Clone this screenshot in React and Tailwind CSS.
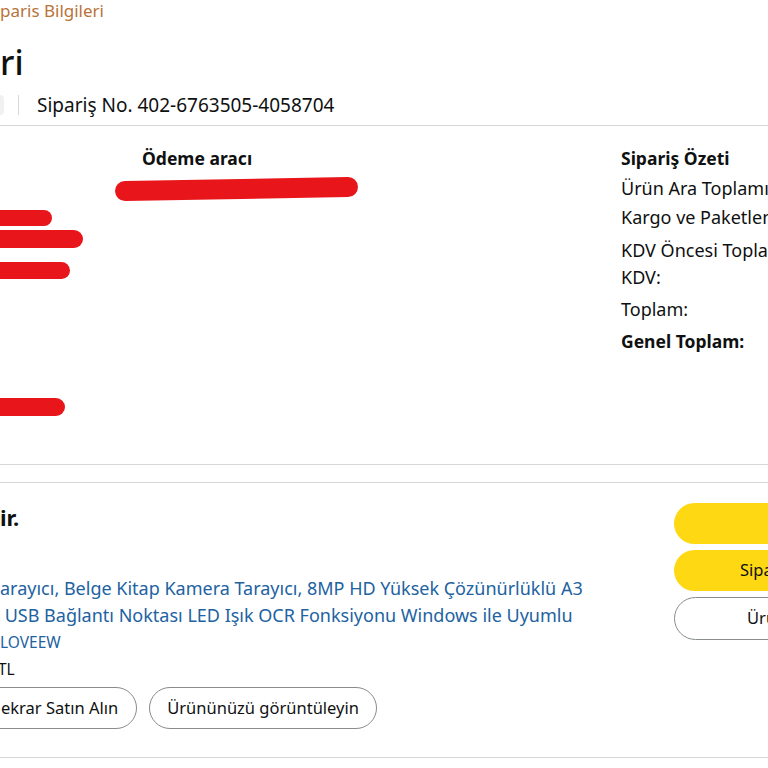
import React from "react"

const Redact = ({ className }) => (
  <div className={"absolute bg-[#e8161b] rounded-full " + className}></div>
)

export default function App() {
  return (
    <div className="w-[768px] h-[768px] overflow-hidden bg-white text-[#0f1111] relative" style={{ fontFamily: '"Noto Sans", "Open Sans", sans-serif' }}>
      {/* breadcrumb */}
      <div className="h-[24px] leading-[22px] text-[17px] text-[#b8733a] whitespace-nowrap">paris Bilgileri</div>

      {/* title */}
      <h1 className="mt-[16px] h-[44px] leading-[44px] text-[34px] font-medium whitespace-nowrap">ri</h1>

      {/* order meta */}
      <div className="mt-[6px] flex items-center h-[30px] whitespace-nowrap">
        <div className="w-[4px] h-[20px] bg-[#f0f2f2] rounded-r-sm"></div>
        <div className="ml-[14px] w-px h-[20px] bg-[#d5d9d9]"></div>
        <span className="ml-[18px] text-[19px] leading-[22px]">Sipariş No. 402-6763505-4058704</span>
      </div>

      {/* details card */}
      <div className="mt-[5px] border-t border-b border-[#d5d9d9] h-[340px] relative">
        <div className="flex pt-[21px]">
          <div className="w-[142px] shrink-0"></div>
          <div className="w-[479px] shrink-0">
            <div className="text-[17.5px] font-bold leading-[22px] whitespace-nowrap">Ödeme aracı</div>
          </div>
          <div className="flex-1 whitespace-nowrap text-[18px]">
            <div className="font-bold leading-[22px] text-[17.5px]">Sipariş Özeti</div>
            <div className="mt-[8px] leading-[22px]">Ürün Ara Toplamı:</div>
            <div className="mt-[7px] leading-[22px]">Kargo ve Paketleme:</div>
            <div className="mt-[11px] leading-[22px]">KDV Öncesi Toplam:</div>
            <div className="mt-[5px] leading-[22px]">KDV:</div>
            <div className="mt-[10px] leading-[22px]">Toplam:</div>
            <div className="mt-[10px] leading-[22px] font-bold text-[17.5px]">Genel Toplam:</div>
          </div>
        </div>
        <Redact className="left-[115px] top-[53px] w-[243px] h-[20px] -rotate-[1deg]" />
        <Redact className="left-[-20px] top-[84px] w-[72px] h-[16px]" />
        <Redact className="left-[-20px] top-[104px] w-[103px] h-[18px]" />
        <Redact className="left-[-20px] top-[136px] w-[90px] h-[17px]" />
        <Redact className="left-[-20px] top-[272px] w-[85px] h-[18px]" />
      </div>

      {/* spacer between cards */}
      <div className="h-[17px] bg-white"></div>

      {/* shipment card */}
      <div className="border-t border-b border-[#d5d9d9] h-[276px] flex">
        <div className="flex-1 pt-[20px] whitespace-nowrap">
          <div className="text-[22px] font-bold leading-[28px]">ir.</div>
          <div className="mt-[44px] text-[18px] leading-[27px] text-[#2162a1]">
            <div>arayıcı, Belge Kitap Kamera Tarayıcı, 8MP HD Yüksek Çözünürlüklü A3</div>
            <div>&nbsp;USB Bağlantı Noktası LED Işık OCR Fonksiyonu Windows ile Uyumlu</div>
          </div>
          <div className="text-[15.5px] leading-[27px] text-[#2162a1]">LOVEEW</div>
          <div className="text-[15.5px] leading-[27px] -ml-[2px]">TL</div>
          <div className="mt-[4px] flex gap-[12px]">
            <button className="-ml-[40px] h-[42px] pl-[40px] pr-[18px] rounded-full border border-[#888c8c] bg-white text-[16.5px]">ekrar Satın Alın</button>
            <button className="h-[42px] px-[17px] rounded-full border border-[#888c8c] bg-white text-[16.5px]">Ürününüzü görüntüleyin</button>
          </div>
        </div>
        <div className="w-[94px] shrink-0 pt-[20px] flex flex-col gap-[6px] whitespace-nowrap">
          <button className="h-[41px] rounded-l-full bg-[#ffd814] w-[140px]"></button>
          <button className="h-[41px] rounded-l-full bg-[#ffd814] w-[140px] text-[16.5px] text-left pl-[66px]">Sipariş</button>
          <button className="h-[43px] rounded-l-full border border-[#888c8c] bg-white w-[140px] text-[16.5px] text-left pl-[72px]">Ürünü</button>
        </div>
      </div>
    </div>
  )
}
